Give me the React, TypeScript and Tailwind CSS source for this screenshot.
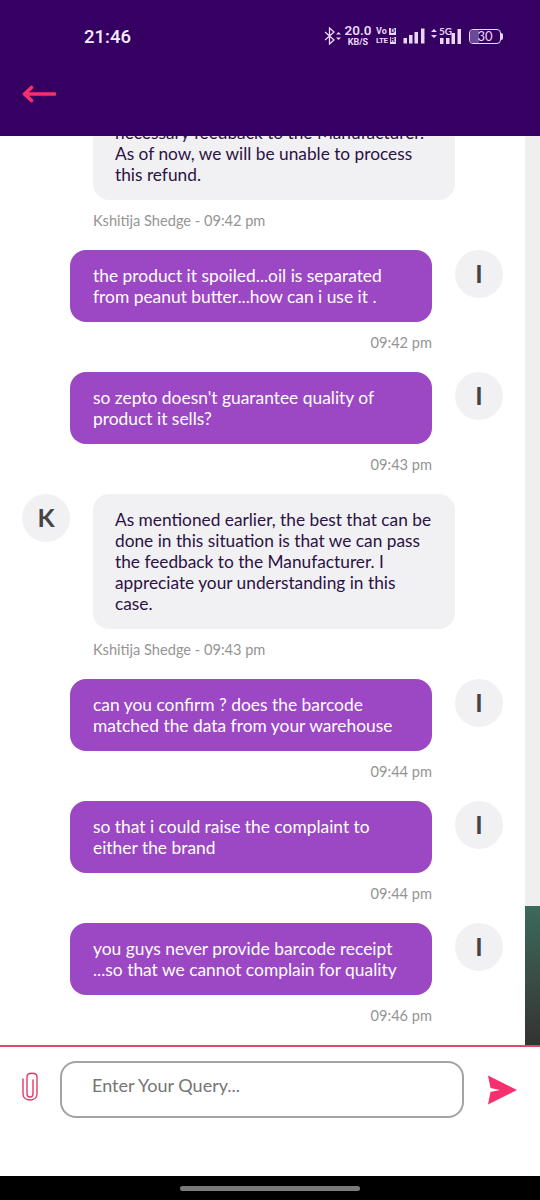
const lato = { fontFamily: "Lato, 'Open Sans', sans-serif" };

function Avatar({ letter }: { letter: string }) {
  return (
    <div className="w-12 h-12 shrink-0 rounded-full bg-[#f1f1f3] flex items-center justify-center text-[25px] font-bold text-[#444446]">
      {letter}
    </div>
  );
}

function UserMessage({ lines, time }: { lines: string[]; time: string }) {
  return (
    <div className="flex justify-end gap-[23px] pr-[22px]">
      <div className="w-[362px]">
        <div className="bg-[#9c47c4] text-white rounded-[16px] px-[23px] py-[15px] text-[17.400px] leading-[21px]">
          {lines.map((l) => (
            <div key={l} className="whitespace-nowrap">{l}</div>
          ))}
        </div>
        <div className="text-right text-[14.600px] leading-[20px] mt-[11px] text-[#949494]">{time}</div>
      </div>
      <Avatar letter="I" />
    </div>
  );
}

function AgentMessage({ lines, time, avatar = true }: { lines: string[]; time: string; avatar?: boolean }) {
  return (
    <div className="flex gap-[23px] pl-[22px]">
      {avatar ? <Avatar letter="K" /> : <div className="w-12 shrink-0" />}
      <div className="w-[362px]">
        <div className="bg-[#f1f1f3] text-[#2c1245] rounded-[16px] px-[22px] py-[15px] text-[17.300px] leading-[21px]">
          {lines.map((l) => (
            <div key={l} className="whitespace-nowrap">{l}</div>
          ))}
        </div>
        <div className="text-[14.600px] leading-[20px] mt-[11px] text-[#949494]">Kshitija Shedge - {time}</div>
      </div>
    </div>
  );
}

function StatusIcons() {
  return (
    <div className="flex items-center text-[#e9d8f5]">
      <svg width="18" height="18" viewBox="0 0 18 18" fill="none" stroke="currentColor" strokeWidth="1.300">
        <path d="M1 5l9 8-4.500 4V1L10 5l-9 8" />
        <path d="M12 7.500l2.500-2.500 2.500 2.500zM12 10.500l2.500 2.500 2.500-2.500z" fill="currentColor" stroke="none" />
      </svg>
      <div className="w-[26px] ml-[3px] flex flex-col items-center font-semibold leading-none" style={{ fontFamily: "Roboto, sans-serif" }}>
        <span className="text-[13.500px] leading-[11px]">20.0</span>
        <span className="text-[9px] leading-[9px] mt-[2px] font-bold">KB/S</span>
      </div>
      <div className="w-[20px] ml-[5px] flex flex-col gap-[2px] text-[9px] font-bold" style={{ fontFamily: "Roboto, sans-serif" }}>
        <div className="flex items-center justify-between h-[7px] leading-none">
          <span>Vo</span>
          <span className="px-[1px] bg-[#e9d8f5] text-[#360063] text-[7px]">D</span>
        </div>
        <div className="flex items-center justify-between h-[7px] leading-none">
          <span className="text-[8px] tracking-[-0.5px]">LTE</span>
          <span className="px-[1px] bg-[#e9d8f5] text-[#360063] text-[7px]">R</span>
        </div>
      </div>
      <svg className="ml-[7px]" width="22" height="16" viewBox="0 0 22 16" fill="currentColor">
        <rect x="0.500" y="10" width="3.500" height="5.500" />
        <rect x="6" y="7" width="3.500" height="8.500" />
        <rect x="11.500" y="4" width="3.500" height="11.500" />
        <rect x="18" y="0.500" width="3.500" height="15" />
      </svg>
      <svg className="ml-[6px] mb-[6px]" width="6" height="9" viewBox="0 0 6 9" fill="currentColor">
        <path d="M3 0L6 3H0zM3 9L0 6h6z" />
      </svg>
      <div className="relative w-[23px] h-[17px] ml-[1px]">
        <span className="absolute left-[1px] top-[-2px] text-[10px] font-bold leading-[11px]">5G</span>
        <svg className="absolute left-0 top-0" width="23" height="17" viewBox="0 0 23 17" fill="currentColor">
          <rect x="2" y="10" width="3.500" height="6" />
          <rect x="8" y="10" width="3.500" height="6" />
          <rect x="13.500" y="5" width="3.500" height="11" />
          <rect x="19.500" y="1" width="3.500" height="15" />
        </svg>
      </div>
      <div className="ml-[8px] flex items-center">
        <div className="relative w-[32px] h-[15px] rounded-[4px] border border-[#e9d8f5] overflow-hidden flex items-center justify-center">
          <div className="absolute left-0 inset-y-0 w-[9px] bg-[#6a4a92]" />
          <span className="relative text-[13px] leading-none">30</span>
        </div>
        <div className="w-[2px] h-[7px] bg-[#e9d8f5] rounded-r-sm" />
      </div>
    </div>
  );
}

export default function App() {
  return (
    <div className="h-[1200px] flex flex-col bg-white overflow-hidden" style={lato}>
      <header className="h-[136px] shrink-0 bg-[#360063] z-10">
        <div className="h-[72px] flex items-center justify-between pl-[84px] pr-[37px]">
          <span className="mt-[4px] text-[18.500px] font-medium text-[#f6eefb]" style={{ fontFamily: "Roboto, sans-serif" }}>21:46</span>
          <StatusIcons />
        </div>
        <svg className="ml-[22px] mt-[13px]" width="34" height="18" viewBox="0 0 34 18" fill="none" stroke="#f72f6c" strokeWidth="3.600" strokeLinecap="round" strokeLinejoin="round">
          <path d="M2.500 9h30M9.500 2.500L2.500 9l7 6.500" />
        </svg>
      </header>

      <div className="flex-1 min-h-0 flex">
        <div className="flex-1 min-w-0 flex flex-col justify-end gap-[19px] pb-[19px] overflow-hidden">
          <AgentMessage
            avatar={false}
            lines={["necessary feedback to the Manufacturer.", "As of now, we will be unable to process", "this refund."]}
            time="09:42 pm"
          />
          <UserMessage lines={["the product it spoiled...oil is separated", "from peanut butter...how can i use it ."]} time="09:42 pm" />
          <UserMessage lines={["so zepto doesn't guarantee quality of", "product it sells?"]} time="09:43 pm" />
          <AgentMessage
            lines={[
              "As mentioned earlier, the best that can be",
              "done in this situation is that we can pass",
              "the feedback to the Manufacturer. I",
              "appreciate your understanding in this",
              "case.",
            ]}
            time="09:43 pm"
          />
          <UserMessage lines={["can you confirm ? does the barcode", "matched the data from your warehouse"]} time="09:44 pm" />
          <UserMessage lines={["so that i could raise the complaint to", "either the brand"]} time="09:44 pm" />
          <UserMessage lines={["you guys never provide barcode receipt", "...so that we cannot complain for quality"]} time="09:46 pm" />
        </div>
        <div className="w-[15px] shrink-0 bg-[#efefef] flex flex-col justify-end">
          <div className="h-[139px] bg-gradient-to-b from-[#3b6a5c] to-[#333333]" />
        </div>
      </div>

      <footer className="h-[131px] shrink-0 border-t-2 border-[#e2466a] bg-white flex items-start pt-[14px]">
        <svg className="ml-[21px] mt-[11px] shrink-0" width="18" height="30" viewBox="0 0 18 30" fill="none" stroke="#e23a68" strokeWidth="1.400" strokeLinecap="round">
          <path d="M12 8v14c0 4-6 4-6 0V5c0-5 10-5 10 0v17c0 8-14 8-14 0V7" />
        </svg>
        <div className="ml-[21px] w-[404px] h-[57px] rounded-[16px] border-2 border-[#a3a3a3] pl-[30px] pt-[8px] text-[18px] leading-[28px] text-[#757575] shrink-0">
          Enter Your Query...
        </div>
        <svg className="ml-[23px] mt-[14px] shrink-0" width="30" height="30" viewBox="0 0 30 30" fill="#f72f6c">
          <path d="M1 0.500L30 15 1 29.500 3.500 17 13 15 3.500 13z" />
        </svg>
      </footer>

      <div className="h-6 shrink-0 bg-black flex items-center justify-center">
        <div className="w-[180px] h-[5px] rounded-full bg-[#7a7a7a]" />
      </div>
    </div>
  );
}
